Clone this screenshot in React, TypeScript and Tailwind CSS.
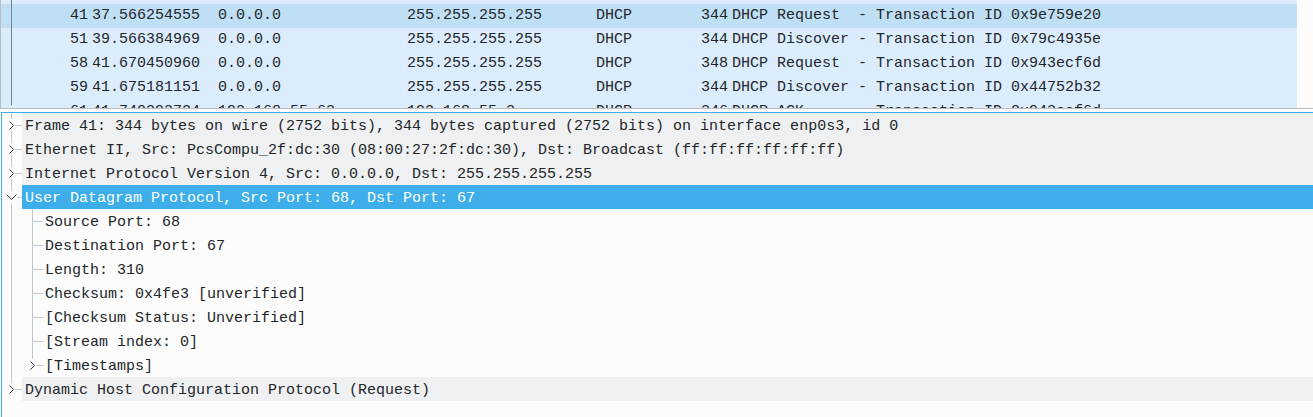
import React from "react";

type Packet = {
  no: string;
  time: string;
  src: string;
  dst: string;
  proto: string;
  len: string;
  info: string;
  selected?: boolean;
};

const packets: Packet[] = [
  { no: "", time: "", src: "", dst: "", proto: "", len: "", info: "" },
  {
    no: "41",
    time: "37.566254555",
    src: "0.0.0.0",
    dst: "255.255.255.255",
    proto: "DHCP",
    len: "344",
    info: "DHCP Request  - Transaction ID 0x9e759e20",
    selected: true,
  },
  {
    no: "51",
    time: "39.566384969",
    src: "0.0.0.0",
    dst: "255.255.255.255",
    proto: "DHCP",
    len: "344",
    info: "DHCP Discover - Transaction ID 0x79c4935e",
  },
  {
    no: "58",
    time: "41.670450960",
    src: "0.0.0.0",
    dst: "255.255.255.255",
    proto: "DHCP",
    len: "348",
    info: "DHCP Request  - Transaction ID 0x943ecf6d",
  },
  {
    no: "59",
    time: "41.675181151",
    src: "0.0.0.0",
    dst: "255.255.255.255",
    proto: "DHCP",
    len: "344",
    info: "DHCP Discover - Transaction ID 0x44752b32",
  },
  {
    no: "61",
    time: "41.740293724",
    src: "192.168.55.63",
    dst: "192.168.55.3",
    proto: "DHCP",
    len: "346",
    info: "DHCP ACK      - Transaction ID 0x943ecf6d",
  },
];

const LINE = "#c3c7cb";
const ARROW = "#31363b";

function TopBranch({ expanded, last }: { expanded?: boolean; last?: boolean }) {
  return (
    <svg width="20" height="24" className="shrink-0">
      <line x1="9.5" y1="0" x2="9.5" y2="6" stroke={LINE} />
      {!last && <line x1="9.5" y1="18" x2="9.5" y2="24" stroke={LINE} />}
      {expanded ? (
        <path d="M4.5 9.5 L9.5 14.5 L14.5 9.5" fill="none" stroke={ARROW} />
      ) : (
        <path d="M7.5 8.5 L11.5 12.5 L7.5 16.5" fill="none" stroke={ARROW} />
      )}
      <line x1={expanded ? 15 : 13} y1="12.5" x2="20" y2="12.5" stroke={LINE} />
    </svg>
  );
}

function ChildBranch({ last, collapsed }: { last?: boolean; collapsed?: boolean }) {
  return (
    <svg width="43" height="24" className="shrink-0">
      <line x1="9.5" y1="0" x2="9.5" y2="24" stroke={LINE} />
      {collapsed ? (
        <>
          <line x1="30.5" y1="0" x2="30.5" y2="6" stroke={LINE} />
          <path d="M28.5 8.5 L32.5 12.5 L28.5 16.5" fill="none" stroke={ARROW} />
          <line x1="35" y1="12.5" x2="41" y2="12.5" stroke={LINE} />
        </>
      ) : (
        <>
          <line x1="30.5" y1="0" x2="30.5" y2={last ? 12.5 : 24} stroke={LINE} />
          <line x1="31" y1="12.5" x2="41" y2="12.5" stroke={LINE} />
        </>
      )}
    </svg>
  );
}

function TopRow({
  text,
  expanded,
  selected,
  last,
}: {
  text: string;
  expanded?: boolean;
  selected?: boolean;
  last?: boolean;
}) {
  return (
    <div className="flex h-[24px] overflow-hidden">
      <TopBranch expanded={expanded} last={last} />
      <div
        className={`flex-1 pl-[3px] pt-[3px] leading-[21px] whitespace-pre ${
          selected ? "bg-[#3daee9] text-white" : "bg-[#eff0f1] text-[#232629]"
        }`}
      >
        {text}
      </div>
    </div>
  );
}

function ChildRow({ text, last, collapsed }: { text: string; last?: boolean; collapsed?: boolean }) {
  return (
    <div className="flex h-[24px] overflow-hidden">
      <ChildBranch last={last} collapsed={collapsed} />
      <div className="flex-1 pt-[3px] leading-[21px] whitespace-pre text-[#232629]">{text}</div>
    </div>
  );
}

export default function App() {
  return (
    <div
      className="w-[1313px] h-[417px] overflow-hidden bg-[#fcfcfc] text-[15px] leading-[24px] text-[#232629]"
      style={{ fontFamily: '"Liberation Mono", "DejaVu Sans Mono", monospace' }}
    >
      {/* Packet list */}
      <div className="relative flex h-[108px] overflow-hidden border-l border-[#b9bcbf]">
        <div className="w-[1296px] shrink-0 bg-[#dbedfd]">
          <div className="flex flex-col mt-[-20px]">
            {packets.map((p, i) => (
              <div
                key={i}
                className={`flex h-[24px] whitespace-pre ${p.selected ? "bg-[#bfdff5]" : "bg-[#dbedfd]"}`}
              >
                <div className="w-[89px] shrink-0 pr-[2px] text-right">{p.no}</div>
                <div className="w-[126px] shrink-0 pl-[2px]">{p.time}</div>
                <div className="w-[189px] shrink-0 pl-[2px]">{p.src}</div>
                <div className="w-[189px] shrink-0 pl-[2px]">{p.dst}</div>
                <div className="w-[100px] shrink-0 pl-[2px]">{p.proto}</div>
                <div className="w-[37px] shrink-0 pr-[3px] text-right">{p.len}</div>
                <div className="flex-1 pl-[1px]">{p.info}</div>
              </div>
            ))}
          </div>
        </div>
        <div className="flex-1 bg-[#fcfcfc]" />
        <div className="absolute left-[10px] top-0 h-[105px] w-[1px] bg-[#75828f]" />
      </div>
      <div className="h-[1px] bg-[#bcbebf]" />
      <div className="h-[3px]" />

      {/* Packet details */}
      <div className="pl-[1px]">
        <div className="h-[320px] border-l border-t border-[#3daee9] bg-[#fcfcfc]">
          <TopRow text="Frame 41: 344 bytes on wire (2752 bits), 344 bytes captured (2752 bits) on interface enp0s3, id 0" />
          <TopRow text="Ethernet II, Src: PcsCompu_2f:dc:30 (08:00:27:2f:dc:30), Dst: Broadcast (ff:ff:ff:ff:ff:ff)" />
          <TopRow text="Internet Protocol Version 4, Src: 0.0.0.0, Dst: 255.255.255.255" />
          <TopRow text="User Datagram Protocol, Src Port: 68, Dst Port: 67" expanded selected />
          <ChildRow text="Source Port: 68" />
          <ChildRow text="Destination Port: 67" />
          <ChildRow text="Length: 310" />
          <ChildRow text="Checksum: 0x4fe3 [unverified]" />
          <ChildRow text="[Checksum Status: Unverified]" />
          <ChildRow text="[Stream index: 0]" />
          <ChildRow text="[Timestamps]" collapsed last />
          <TopRow text="Dynamic Host Configuration Protocol (Request)" last />
        </div>
      </div>
    </div>
  );
}
